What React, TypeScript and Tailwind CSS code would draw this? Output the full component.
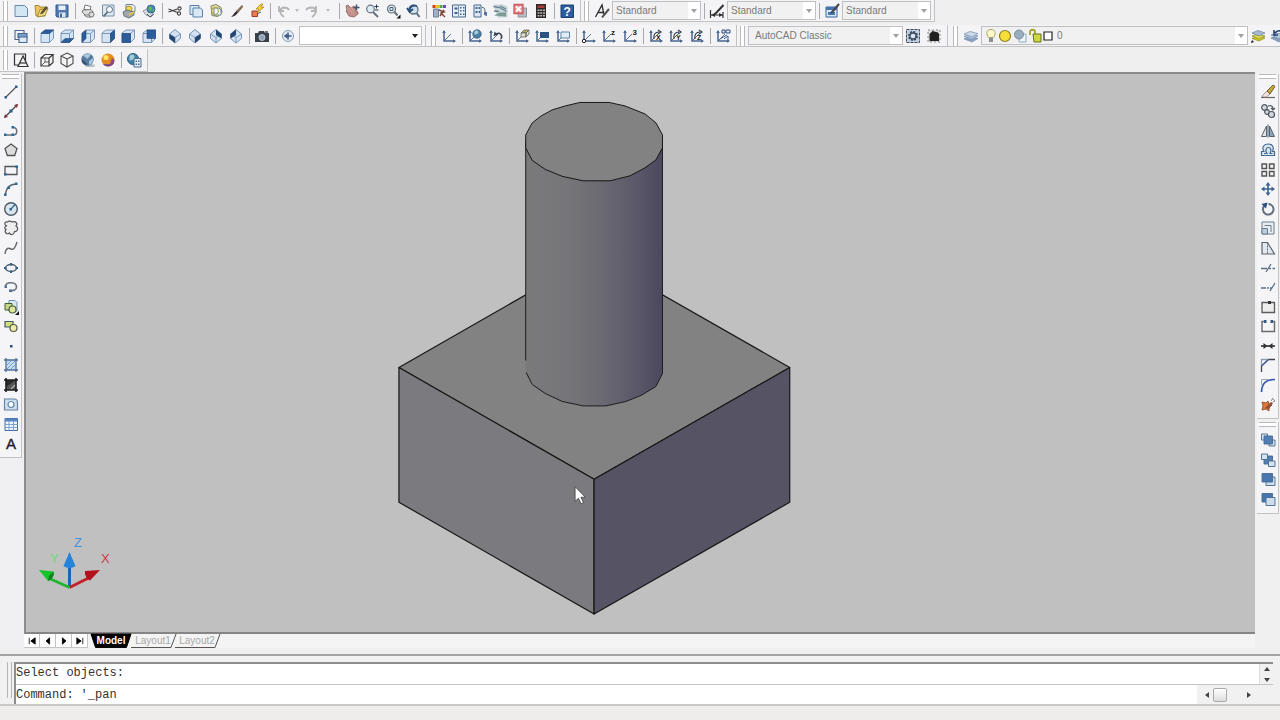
import { type ReactNode, useState } from "react"

const UCS_AXES = (
  <g stroke="#49668f" fill="none" strokeWidth="1.5">
    <path d="M3 3v10h11" />
    <path d="M3 13l7-7" strokeWidth="0.9" />
    <path d="M1.2 5L3 2l1.8 3zM12 11.2l3 1.8-3 1.8z" fill="#49668f" stroke="none" />
  </g>
)

// wireframe cube used by the preset views, one face is filled per view
function ViewCube({ face }: { face: string }) {
  return (
    <g strokeLinejoin="round">
      <path d="M2 5l4-3h8.500v8.500l-4 4H2z" fill="#d5e4f3" stroke="#6f8db3" strokeWidth="0.9" />
      <path d="M2 5.500h8.500v9M10.500 5.500l4-3.500" fill="none" stroke="#6f8db3" strokeWidth="0.9" />
      <path d={face} fill="#2b5c9c" stroke="#24487c" strokeWidth="0.6" />
    </g>
  )
}

function IsoCube({ face }: { face: string }) {
  return (
    <g strokeLinejoin="round">
      <path d="M8 1.500l5.500 4.500v4.500L8 15l-5.500-4.500V6z" fill="#d3e2f2" stroke="#6a8ab2" strokeWidth="0.9" />
      <path d="M2.500 6L8 9.500 13.500 6M8 9.500V15" fill="none" stroke="#6a8ab2" strokeWidth="0.8" />
      <path d={face} fill="#23466f" />
    </g>
  )
}

const icons: Record<string, ReactNode> = {
  new: <path d="M2 2.500h9.500l3 3v8H2z" fill="#d3e7f3" stroke="#6788ab" />,
  open: (
    <g strokeWidth="0.8">
      <path d="M2 2.500h4l1 1.500h5v9H3z" fill="#e9c75d" stroke="#937525" />
      <path d="M4.500 14L7 6.500l8-1-3 7z" fill="#f6df83" stroke="#937525" />
      <path d="M8 9l5-6 2 1.500-5 6-3 1z" fill="#5a5230" stroke="none" />
    </g>
  ),
  save: (
    <g>
      <path d="M2 2h12v12H3l-1-1z" fill="#4f7bb2" stroke="#36598a" />
      <path d="M4.500 2.500h7v4.500h-7z" fill="#e6f0f8" />
      <path d="M5 9.500h6.500V14H5z" fill="#dce7ee" />
      <path d="M6 10.500h2V14H6z" fill="#41689b" />
    </g>
  ),
  plot: (
    <g fill="#dcdcdc" stroke="#696969" strokeWidth="0.9">
      <path d="M5 2l6 1.500-1 4-6-1z" fill="#fafafa" />
      <path d="M3 7l8-.5 2 2.500-2 3H5l-3-3z" />
      <circle cx="11.500" cy="11.500" r="2.500" />
      <path d="M4 12l3 2h4" fill="none" />
    </g>
  ),
  preview: (
    <g>
      <path d="M2.500 2h11.500v11H2.500z" fill="#dce9f1" stroke="#7790aa" />
      <circle cx="9.500" cy="6.500" r="3" fill="#f6fbff" stroke="#5b6c7c" />
      <path d="M7.500 9l-4 4.500" stroke="#5b6c7c" strokeWidth="1.800" />
    </g>
  ),
  publish: (
    <g>
      <path d="M5 1.500h7l2 2v5H5z" fill="#e9edf2" stroke="#74859a" />
      <circle cx="8" cy="6" r="3" fill="#f0d94d" stroke="#9d842a" strokeWidth="0.8" />
      <path d="M2 9l4-2 7 2v3l-5 3-5-2z" fill="#9fa8b0" stroke="#545e68" strokeWidth="0.8" />
      <path d="M8 12l5-3" stroke="#e6c833" strokeWidth="1.500" />
    </g>
  ),
  dwf: (
    <g>
      <path d="M2 8l6-3 5 3-3 6-5-2z" fill="#d8dde2" stroke="#80878d" strokeWidth="0.8" />
      <circle cx="10" cy="6" r="4" fill="#4388b8" stroke="#2b6288" strokeWidth="0.8" />
      <path d="M7.500 4c2-2 3 0 3.500 1s-1 3-2 3-2-2-1.500-4zM12 6l1.500 1-1 2-1-1z" fill="#65b35a" />
      <path d="M6 11l3 3 4-3" fill="none" stroke="#4e555b" />
    </g>
  ),
  cut: (
    <g fill="none" stroke="#3f3f3f" strokeWidth="1.100">
      <path d="M1.500 6l9 3.500M1.500 9l9-3" />
      <circle cx="12.500" cy="5.500" r="1.600" />
      <circle cx="12" cy="10.500" r="1.600" />
    </g>
  ),
  copyclip: (
    <g fill="#d7e8f3" stroke="#5d81a8">
      <path d="M2 2.500h9v9H2z" />
      <path d="M5 5h7.500l2 2v7H5z" />
    </g>
  ),
  paste: (
    <g>
      <path d="M3 3l5-1.500 5 3 1 5-4 4-6-1z" fill="#e6dfa8" stroke="#83805a" />
      <path d="M6 5h5l2 2v5H6z" fill="#f2f6f8" stroke="#6d8ea0" />
      <circle cx="7" cy="8" r="3.500" fill="none" stroke="#a9a33c" />
    </g>
  ),
  match: (
    <g>
      <path d="M14 2.500L8.500 8l1.500 1.500L14.500 4z" fill="#9b7b5c" stroke="#5a4330" strokeWidth="0.7" />
      <path d="M8.500 8L10 9.500c-2 3-4 4-7 4.500 2-1.500 3-4 5.500-6z" fill="#332d2b" />
    </g>
  ),
  block: (
    <g>
      <path d="M3 8h5.500v5.500H3z" fill="#e97b58" stroke="#9a3d27" />
      <path d="M12 1L7 6h3L8 10l7-6h-3l2-3z" fill="#f7cc34" stroke="#a98215" strokeWidth="0.7" />
      <path d="M8 11l4-2" stroke="#555" />
    </g>
  ),
  undo: <path d="M9 14C4 11 4 5 9 4.500c2 0 4 .5 5 2.500M4 3v5h5" fill="none" stroke="#b4b4b4" strokeWidth="1.800" />,
  redo: <path d="M9 14c5-3 5-9 0-9.500C7 4.500 4 5 3 7M13 3v5H8" fill="none" stroke="#b4b4b4" strokeWidth="1.800" />,
  pan: (
    <g>
      <path d="M2 3l2-1 3 3 3-2 2 3-1 2 3 1v2l-4 3-5-1-3-5 1-1z" fill="#c58f8a" stroke="#85605e" strokeWidth="0.8" />
      <path d="M12.500 1.500v6M9.500 4.500h6" stroke="#42536a" strokeWidth="1.500" />
      <path d="M4 5l5 5M7 4l3 4" stroke="#dbb1ab" strokeWidth="0.8" />
    </g>
  ),
  zoomrt: (
    <g fill="none" stroke="#66717c">
      <circle cx="6.500" cy="6" r="3.800" fill="#deebf3" strokeWidth="1.200" />
      <path d="M9 9l5 5" strokeWidth="2" />
      <path d="M12.500 1.500v4M10.500 3.500h4M11 7h3.500" stroke="#2d3a48" />
    </g>
  ),
  zoomwin: (
    <g fill="none" stroke="#66717c">
      <circle cx="6.500" cy="6" r="4" fill="#deebf3" strokeWidth="1.200" />
      <path d="M9.500 9l3 3.500" strokeWidth="2" />
      <path d="M5 4.500h3v3H5z" stroke="#4d6073" />
      <path d="M15.500 11.500v4h-4z" fill="#111" stroke="none" />
    </g>
  ),
  zoomprev: (
    <g fill="none" stroke="#5f7080">
      <circle cx="8.500" cy="6.500" r="4.500" fill="#cfe0ec" strokeWidth="1.300" />
      <path d="M11.500 10l3 4" strokeWidth="2" />
      <path d="M12 3C8 1.500 5 4 4.500 7M2 5l2.500 4L8 6" stroke="#264b79" strokeWidth="1.800" />
    </g>
  ),
  properties: (
    <g>
      <path d="M1.500 2h3v3h-3z" fill="#d33a2c" />
      <path d="M5 2h3v3H5z" fill="#e8bf2f" />
      <path d="M8.500 2h3v3h-3z" fill="#51a849" />
      <path d="M12 2h3v3h-3z" fill="#704bb4" />
      <path d="M2.500 6h5v8h-5z" fill="#9fb0c8" stroke="#5a6c8a" strokeWidth="0.8" />
      <path d="M8 7l5 2-3 1 4 4M9 13l4-6" stroke="#7d4435" strokeWidth="1.400" fill="none" />
    </g>
  ),
  dcenter: (
    <g>
      <path d="M1.500 2h13v12h-13z" fill="#e6eff6" stroke="#49688c" />
      <path d="M3.500 4.500h3v2h-3zM3.500 9h3v2h-3zM9 4h1.500v1.500H9zM12 4h1.500v1.500H12zM9 7h1.500v1.500H9zM12 7h1.500v1.500H12zM9 10.500h1.500V12H9zM12 10.500h1.500V12H12z" fill="#3f638e" />
      <path d="M7.500 2v12" stroke="#7d99b5" />
    </g>
  ),
  palettes: (
    <g>
      <path d="M2 2h7v12H2z" fill="#dde9f2" stroke="#49688c" />
      <path d="M3.500 4h2v2h-2zM6.500 4H8v2H6.500zM3.500 8h2v2h-2zM6.500 8H8v2H6.500z" fill="#44688e" />
      <path d="M10 4.500c3 0 3 2 3 5" fill="none" stroke="#49535e" />
      <path d="M12 9h3v4l-3-1z" fill="#56779c" />
    </g>
  ),
  sheetset: (
    <g>
      <path d="M2 2h9l4 2v10H6z" fill="#ccd6d9" stroke="#c0cace" strokeWidth="0.8" />
      <path d="M1.500 3.500l6 1 7 4M2 8l5 .5M8 3l6 3" stroke="#648098" strokeWidth="1.300" fill="none" />
      <path d="M2 12.500l6-3h6v4z" fill="#7a9c94" />
    </g>
  ),
  markup: (
    <g>
      <path d="M7 5h7.500v9H6z" fill="#b8bcc2" stroke="#90969f" />
      <path d="M2 1.500h9v9H2z" fill="#e58b8e" stroke="#cf5b60" strokeWidth="1.300" />
      <path d="M4 3.500l5 5M9 3.500l-5 5" stroke="#fff" strokeWidth="2" />
    </g>
  ),
  calc: (
    <g>
      <path d="M3 1h10v14H3z" fill="#2e2b2b" />
      <path d="M4.500 2.500h7V5h-7z" fill="#a83b36" />
      <path d="M4.500 6.500h2v1.500h-2zM7.200 6.500h2v1.500h-2zM10 6.500h2v1.500h-2zM4.500 9.200h2v1.500h-2zM7.200 9.200h2v1.500h-2zM10 9.200h2v1.500h-2zM4.500 12h2v1.500h-2zM7.200 12h2v1.500h-2zM10 12h2v1.500h-2z" fill="#bdb6b3" />
    </g>
  ),
  help: (
    <g>
      <path d="M2 2h12.500v12.500H2z" fill="#2c5c9b" stroke="#1b3f72" />
      <text x="8.200" y="12.500" textAnchor="middle" fontSize="12" fontWeight="700" fill="#fff">?</text>
    </g>
  ),
  textstyle: (
    <g fill="none" stroke="#2d2d2d">
      <path d="M1.500 14L8 2l2 10M4 9.500h5" strokeWidth="1.300" />
      <path d="M15 6l-5 6-2 2.500" stroke="#555" strokeWidth="2" />
    </g>
  ),
  dimstyle: (
    <g stroke="#333" fill="none">
      <path d="M1.500 7v8M14 9v6M2 12h12" strokeWidth="1.200" />
      <path d="M14.500 2L8 9l-3 3" strokeWidth="2" />
      <path d="M2 12l4-2v4zM14 12l-4-2v4z" fill="#333" stroke="none" />
    </g>
  ),
  tablestyle: (
    <g>
      <path d="M2 4h11v10H2z" fill="#dbe9f5" stroke="#39629a" />
      <path d="M2 4h11v3H2zM4 9h7v3H4z" fill="#4777b1" />
      <path d="M15 1l-5 6-3 3" stroke="#464646" strokeWidth="2" />
    </g>
  ),
  namedviews: (
    <g stroke="#48688f" strokeWidth="1.100">
      <path d="M2 2.500h9v9H2z" fill="#f0f4f8" />
      <path d="M5 5.500h9v4H5z" fill="#7ba0c8" />
      <path d="M6 9h8v5.500H6z" fill="#dce9f4" />
    </g>
  ),
  top: <ViewCube face="M2 5.500L6 2h8.500l-4 3.500z" />,
  bottom: <ViewCube face="M2 14.500l4-4h8.500l-4 4z" />,
  left: <ViewCube face="M2 5.500L6 2v8.500l-4 4z" />,
  right: <ViewCube face="M10.500 5.500l4-3.500v8.500l-4 4z" />,
  front: <ViewCube face="M2 5.500h8.500v9H2z" />,
  back: <ViewCube face="M6 2h8.500v8.500H6z" />,
  sw: <IsoCube face="M2.500 6L8 9.500V15l-5.500-4.500z" />,
  se: <IsoCube face="M8 9.500L13.500 6v4.500L8 15z" />,
  ne: <IsoCube face="M8 1.500L13.500 6v4.500L8 7z" />,
  nw: <IsoCube face="M8 1.500L2.500 6v4.500L8 7z" />,
  camera: (
    <g>
      <path d="M1 5h3l1-2h5l1 2h4v9H1z" fill="#39414b" />
      <circle cx="8" cy="9.500" r="3" fill="#8ba4bf" stroke="#cfd7df" strokeWidth="0.8" />
      <path d="M11 3h3v2h-3z" fill="#6e7780" />
    </g>
  ),
  prevview: (
    <g>
      <circle cx="8" cy="8" r="5.500" fill="#e4ecf4" stroke="#8b9aab" />
      <path d="M8 4.500v7M4.500 8h7" stroke="#3c5b83" strokeWidth="1.600" />
      <path d="M4 8l3-2.500v5z" fill="#3c5b83" />
    </g>
  ),
  ucs: UCS_AXES,
  ucsworld: (
    <g>
      {UCS_AXES}
      <circle cx="10" cy="6" r="4.200" fill="#477fa5" stroke="#2e5878" strokeWidth="0.8" />
      <path d="M8 3c2-1 3 0 3.500 1S9 7 8 6.500 7 4 8 3z" fill="#a9d0d6" />
    </g>
  ),
  ucsprev: (
    <g>
      {UCS_AXES}
      <path d="M13 11c2-4-1-7-5-5" fill="none" stroke="#3a4655" strokeWidth="1.600" />
      <path d="M5.500 8l1-4.500L10 7z" fill="#3a4655" />
    </g>
  ),
  ucsface: (
    <g>
      {UCS_AXES}
      <path d="M7 5l3-3h5l-3 3z" fill="#b7b060" stroke="#555" strokeWidth="0.7" />
      <path d="M7 5h5v4H7zM12 5l3-3v4l-3 3z" fill="#dbe0d2" stroke="#555" strokeWidth="0.7" />
    </g>
  ),
  ucsobject: (
    <g>
      {UCS_AXES}
      <path d="M6 4h9v6H6z" fill="#285283" />
    </g>
  ),
  ucsview: (
    <g>
      {UCS_AXES}
      <path d="M6 4h8.500v6H6z" fill="#e3edf6" stroke="#5f81a8" />
    </g>
  ),
  ucsorigin: (
    <g>
      {UCS_AXES}
      <circle cx="3" cy="13" r="1.700" fill="#fff" stroke="#222" />
    </g>
  ),
  ucsz: (
    <g>
      {UCS_AXES}
      <text x="10" y="7" fontSize="8" fontWeight="700" fill="#222">z</text>
    </g>
  ),
  ucs3: (
    <g>
      {UCS_AXES}
      <text x="10.500" y="7" fontSize="8" fontWeight="700" fill="#222">3</text>
    </g>
  ),
  ucsrx: (
    <g>
      {UCS_AXES}
      <path d="M6 11c-1-4 1-7 5-7M10 2l3 2-3 2" fill="none" stroke="#303c4c" strokeWidth="1.200" />
      <text x="8" y="11.500" fontSize="7" fontWeight="700" fill="#222">X</text>
    </g>
  ),
  ucsry: (
    <g>
      {UCS_AXES}
      <path d="M6 11c-1-4 1-7 5-7M10 2l3 2-3 2" fill="none" stroke="#303c4c" strokeWidth="1.200" />
      <text x="8" y="11.500" fontSize="7" fontWeight="700" fill="#222">Y</text>
    </g>
  ),
  ucsrz: (
    <g>
      {UCS_AXES}
      <path d="M6 11c-1-4 1-7 5-7M10 2l3 2-3 2" fill="none" stroke="#303c4c" strokeWidth="1.200" />
      <text x="8" y="11.500" fontSize="7" fontWeight="700" fill="#222">Z</text>
    </g>
  ),
  ucsapply: (
    <g>
      {UCS_AXES}
      <path d="M7 2h3v3H7zM11 2h4v3h-4z" fill="#e7eef8" stroke="#2d4c7a" />
      <path d="M5 11l7-4M9 11l4-3v4" stroke="#3d5f92" fill="none" />
    </g>
  ),
  wssettings: (
    <g>
      <path d="M1.500 1.500h13v13h-13z" fill="#c3d0de" stroke="#394b60" strokeDasharray="3 1" />
      <circle cx="8" cy="8" r="4" fill="none" stroke="#3b4d62" strokeWidth="2" strokeDasharray="2 1.100" />
      <circle cx="8" cy="8" r="3" fill="#dce7f3" stroke="#3b4d62" strokeWidth="1.300" />
    </g>
  ),
  myws: (
    <g>
      <path d="M2 2h12v12H2z" fill="#dedede" stroke="#888" strokeDasharray="2 2" />
      <path d="M3.500 6l3-3 5.500 1.500 1 1.500v7h-9.500z" fill="#202020" />
    </g>
  ),
  layers: (
    <g stroke="#7890ae" strokeWidth="0.7">
      <path d="M1 11l6-2.500 8 2L9 14z" fill="#8aa3c2" />
      <path d="M1 8.500L7 6l8 2-6 3.500z" fill="#abc0d8" />
      <path d="M1 6l6-2.500 8 2L9 9z" fill="#cddbe9" />
    </g>
  ),
  layercur: (
    <g strokeWidth="0.7">
      <path d="M2 10.500L8 8l7 2-6 3z" fill="#d0cb2c" stroke="#8e8a1c" />
      <path d="M2 8l6-2 7 2-6 3z" fill="#e0da4c" stroke="#8e8a1c" />
      <path d="M2 5l6-2.500L15 5 9 8z" fill="#a6b9d1" stroke="#65809f" />
      <path d="M1 15l1-3 2 2z" fill="#111" />
    </g>
  ),
  layerprev: (
    <g strokeWidth="0.7">
      <path d="M1 10l6-2 8 2-6 4z" fill="#8aa3c2" stroke="#65809f" />
      <path d="M1 7l6-2 8 2-6 4z" fill="#b5c8dc" stroke="#65809f" />
      <path d="M5 5c2-3 6-3 8 0M4 2v5h4" fill="none" stroke="#223f6c" strokeWidth="1.600" />
    </g>
  ),
  wire2d: (
    <g fill="none" stroke="#333" strokeWidth="1.200">
      <path d="M1.500 2h11v11h-11z" />
      <path d="M10 4L5 14.500h10z" fill="#f0f0f0" />
      <path d="M7 11h6" />
    </g>
  ),
  hidden3d: (
    <g fill="none" stroke="#3a3a3a" strokeWidth="1.200">
      <path d="M2 6h8v8H2zM2 6l4-3.500h8L10 6M14 2.500v8L10 14" fill="#f4f4f4" />
      <path d="M6 6.500V10h4M6 10l-3.500 3.500" strokeWidth="0.8" />
    </g>
  ),
  wire3d: <path d="M8 1l6 3v7.500L8 15l-6-3.500V4zM2 4l6 3 6-3M8 7v8" fill="#f6f6f6" stroke="#4b4b4b" strokeWidth="1.100" />,
  realistic: (
    <g>
      <ellipse cx="10" cy="13.500" rx="5" ry="1.500" fill="#b9bdc2" />
      <circle cx="7.500" cy="7.500" r="6.200" fill="#56799e" />
      <path d="M3 3.500c2-2 6-2.500 8-1L7.500 7zM9 9l4-3c1 3-1 6-4 7z" fill="#a9c5dd" />
      <path d="M2 7l5 5-1 1C3 12 1.500 10 2 7z" fill="#334f70" />
    </g>
  ),
  conceptual: (
    <g>
      <circle cx="8" cy="8" r="6.500" fill="#e38a21" />
      <path d="M3 12a6.500 6.500 0 0011-1.500c-3 2-7 2-11 1.500z" fill="#6a3f9a" />
      <path d="M9 14.500a6.500 6.500 0 005.500-6L12 6z" fill="#8a4a86" />
      <circle cx="6" cy="5.500" r="2.600" fill="#ffe65a" />
    </g>
  ),
  vsmanager: (
    <g>
      <circle cx="7" cy="7" r="5.500" fill="#3f81a7" stroke="#2c6080" />
      <path d="M3.500 4c3-3 5-1 5 1s-3 4-5 3z" fill="#a5ced5" />
      <path d="M8 6.500h7V15H8z" fill="#e6eff5" stroke="#45688d" />
      <path d="M9.500 8.500h1.500V10H9.500zM12 8.500h1.500V10H12zM9.500 11.500h1.500V13H9.500zM12 11.500h1.500V13H12z" fill="#45688d" />
    </g>
  ),

  line: (
    <g>
      <path d="M2.500 13.500l11-11" stroke="#555" strokeWidth="1.200" />
      <path d="M1.500 12h2.500v2.500H1.500zM12 1.500h2.500V4H12z" fill="#2c5f8e" />
    </g>
  ),
  xline: (
    <g>
      <path d="M1.500 14.500l13-13" stroke="#444" strokeWidth="1.300" />
      <path d="M1 15l1-4 3 3zM15 1l-1 4-3-3z" fill="#8b3434" />
      <path d="M6.500 6.500h3v3h-3z" fill="#2c5f8e" />
    </g>
  ),
  pline: (
    <g>
      <path d="M2 12h8c5 0 5-7.500 0-7.500" fill="none" stroke="#6b7177" strokeWidth="1.500" />
      <path d="M1 10.500h2.500V13H1zM8.500 10.500H11V13H8.500zM8.500 3H11v2.500H8.500z" fill="#2c6a98" />
    </g>
  ),
  polygon: <path d="M8 2l6 4.500-2.300 7H4.300L2 6.500z" fill="#dcdcdc" stroke="#555" strokeWidth="1.300" />,
  rect: (
    <g>
      <path d="M2 4.500h12v8H2z" fill="none" stroke="#555" strokeWidth="1.300" />
      <path d="M1 11h2.500v2.500H1zM12.500 3.500H15V6h-2.500z" fill="#2c6a98" />
    </g>
  ),
  arc: (
    <g>
      <path d="M2.500 14C3 7 7 3 13.500 3" fill="none" stroke="#5e646a" strokeWidth="1.400" />
      <path d="M1 12.500h2.500V15H1zM4.500 5.500H7V8H4.500zM12 1.500h2.500V4H12z" fill="#2c6a98" />
    </g>
  ),
  circle: (
    <g>
      <circle cx="8" cy="8" r="6.300" fill="#d9e4ec" stroke="#4d5a66" strokeWidth="1.400" />
      <path d="M8 8l4-4.500" stroke="#2c6a98" strokeWidth="1.300" />
      <path d="M6.500 7h2.500v2.500H6.500z" fill="#2c6a98" />
    </g>
  ),
  revcloud: <path d="M4 6C1 5 1 1.500 4.500 2c1-1.500 4-1 4.500 0C13 .5 15 4 13 6c3 2 1.500 6-1.500 5.500-.5 3.500-4 4-5 1.500C4 15 .5 12 3 9.500 .5 8 2 6 4 6z" fill="#eee" stroke="#555" strokeWidth="1.200" />,
  spline: <path d="M2 14c1-7 4-6 6-5s4 0 6-7" fill="none" stroke="#666" strokeWidth="1.400" />,
  ellipse: (
    <g>
      <ellipse cx="8" cy="8" rx="5.500" ry="3.500" fill="#eef2f5" stroke="#4e5963" strokeWidth="1.400" />
      <path d="M7 3h2v2.500H7zM7 10.500h2V13H7zM1 7h2.500v2H1zM12.500 7H15v2h-2.500z" fill="#2c5f8e" />
    </g>
  ),
  ellipsearc: (
    <g>
      <path d="M2.500 7c1-5 11-4 11 1 0 3-3 4-6 3.500" fill="none" stroke="#6a737c" strokeWidth="1.600" />
      <path d="M1.500 6.500H4V9H1.500zM6 10.500h3V13H6z" fill="#4e7196" />
    </g>
  ),
  insert: (
    <g>
      <path d="M6 1.500h6l2 2V12H6z" fill="#dbe8f2" stroke="#6f8fb0" />
      <path d="M2 4.500h7V11H2z" fill="#c6d886" stroke="#3f5e35" />
      <circle cx="9.500" cy="10.500" r="3.500" fill="#dfe79c" stroke="#4c5f3b" strokeWidth="1.200" />
      <path d="M16 12v4h-4z" fill="#111" />
    </g>
  ),
  makeblock: (
    <g>
      <path d="M2 3.500h8V9H2z" fill="#d5dd7a" stroke="#3f5e6a" strokeWidth="1.200" />
      <circle cx="10.500" cy="10" r="3.500" fill="#eceda6" stroke="#555b46" strokeWidth="1.200" />
    </g>
  ),
  point: <path d="M7 7h2.500v2.500H7z" fill="#2b4d7c" />,
  hatch: (
    <g>
      <path d="M3 3h10v10H3z" fill="#c7dcef" />
      <path d="M3 1v14M13 1v14M1 3h14M1 13h14" stroke="#4d6f99" strokeWidth="1.300" />
      <path d="M4 8l4-4M4 12l8-8M8 12l4-4" stroke="#6f9cc8" />
    </g>
  ),
  gradient: (
    <g>
      <path d="M3 3h10v10H3z" fill="#555" />
      <path d="M3 3h10L3 10z" fill="#2a2a2a" />
      <path d="M3 1v14M13 1v14M1 3h14M1 13h14" stroke="#1e1e1e" strokeWidth="1.600" />
      <path d="M8 12l4-4" stroke="#aaa" strokeWidth="1.500" />
    </g>
  ),
  region: (
    <g>
      <path d="M1.500 3h10c2 0 3 2 3 4v7h-13z" fill="#cfdfee" stroke="#6483a6" strokeWidth="1.200" />
      <circle cx="8" cy="8.500" r="3" fill="#fafcfd" stroke="#6483a6" strokeWidth="1.200" />
    </g>
  ),
  table: (
    <g>
      <path d="M2 2.500h12.500v12H2z" fill="#eef5fc" stroke="#47699c" />
      <path d="M2 2.500h12.500v3H2z" fill="#5884bd" />
      <path d="M2 8.500h12.500M2 11.500h12.500M6 5v9.500M10.500 5v9.500" stroke="#7ea2d0" />
    </g>
  ),
  mtext: <text x="8" y="13.500" textAnchor="middle" fontSize="15" fill="#222" stroke="#222" strokeWidth="0.4">A</text>,

  erase: (
    <g>
      <path d="M1 13.500h14" stroke="#666" strokeWidth="1.200" />
      <path d="M2 12l5-5 3 3-3.500 3H3z" fill="#f0e2df" stroke="#8d7c78" strokeWidth="0.8" />
      <path d="M7 7l6-6 2 1.500-5 7.500z" fill="#c9a831" stroke="#51472a" strokeWidth="0.8" />
    </g>
  ),
  copy: (
    <g fill="#d3d9df" stroke="#4d5761" strokeWidth="1.200">
      <circle cx="4.500" cy="4.500" r="2.800" />
      <circle cx="7" cy="9" r="2.300" />
      <circle cx="11.500" cy="11.500" r="3" />
      <path d="M8 3c3-1 5 0 5 3M11 5l2 2 2-2" fill="none" />
    </g>
  ),
  mirror: (
    <g stroke="#5a626a">
      <path d="M6.500 3v10.500h-5z" fill="#e1e6ea" />
      <path d="M9.500 3v10.500h5z" fill="#86a5c4" />
      <path d="M8 1.500v13" stroke="#38597e" />
    </g>
  ),
  offset: (
    <g stroke="#456b90" strokeWidth="1.200">
      <path d="M1.500 13.500h13V9.500h-2c2-4 0-7.500-4.500-7.500S1.500 5.500 4 9.500H1.500z" fill="#d9e6f0" />
      <path d="M4 11.500h3c-2-3-1-6 1.500-6s3 3 1.500 6h2.500" fill="none" />
    </g>
  ),
  array: <path d="M2 2h4.500v4.500H2zM9.500 2H14v4.500H9.500zM2 9.500h4.500V14H2zM9.500 9.500H14V14H9.500z" fill="#f3f3f3" stroke="#555" strokeWidth="1.400" />,
  move: (
    <g fill="#3b6391">
      <path d="M8 3v10M3 8h10" stroke="#3b6391" strokeWidth="1.600" />
      <path d="M8 1l2.500 3.500h-5zM8 15l2.500-3.500h-5zM1 8l3.500-2.500v5zM15 8l-3.500-2.500v5z" />
    </g>
  ),
  rotate: (
    <g>
      <path d="M4.500 4.500A5.300 5.300 0 108.500 3" fill="none" stroke="#66717e" strokeWidth="2" />
      <path d="M1.500 3l6-1.500-1.500 6z" fill="#2e4f7c" />
    </g>
  ),
  scale: (
    <g fill="#e8eef3" stroke="#6b7b8b">
      <path d="M2 2h12v12H2z" />
      <path d="M2 8.500h5.500V14H2z" fill="#bccddf" />
      <path d="M4.500 5.500H11V12" fill="none" />
    </g>
  ),
  stretch: (
    <g>
      <path d="M2 2.500h5.500L14.500 14H2z" fill="#e1e8ef" stroke="#5c6772" strokeWidth="1.200" />
      <path d="M7.500 2.500V14" stroke="#5c6772" strokeDasharray="2 1" />
    </g>
  ),
  trim: <path d="M1 8.500h6M9 8.500h2M12.500 8.500H15M11 4l-5 8" fill="none" stroke="#5b6f86" strokeWidth="1.300" />,
  extend: <path d="M1 9h5M7 9h2M10 9h2M15 4l-5 8" fill="none" stroke="#5b6f86" strokeWidth="1.300" />,
  breakpt: (
    <g>
      <path d="M2 3.500h12.500v10H2z" fill="#ededed" stroke="#5b5b5b" strokeWidth="1.300" />
      <path d="M8 2h3v3H8z" fill="#333" />
    </g>
  ),
  breakline: (
    <g>
      <path d="M5 3.500H2v10h12.500v-10H12" fill="none" stroke="#6a6a6a" strokeWidth="1.400" />
      <path d="M4 2h2.500v3H4zM10.500 2H13v3h-2.500z" fill="#345a80" />
    </g>
  ),
  join: (
    <g fill="#333">
      <path d="M1 8h14" stroke="#333" strokeWidth="1.600" />
      <path d="M3.500 5l4 3-4 3zM12.500 5l-4 3 4 3z" />
    </g>
  ),
  chamfer: (
    <g fill="none" strokeWidth="1.300">
      <path d="M1.500 15V9l7-6.500H15" stroke="#444" />
      <path d="M1.500 9V2.500h7" stroke="#8f9dab" />
      <path d="M1.500 9l7-6.500" stroke="#4b6baf" />
    </g>
  ),
  fillet: (
    <g fill="none">
      <path d="M1.500 8V2.500H8" stroke="#9aa6b4" />
      <path d="M1.500 15C2 6 6 2.500 15 2.500" stroke="#385bad" strokeWidth="1.700" />
    </g>
  ),
  explode: (
    <g>
      <path d="M2 6l4 1 2-2 1 3 3 1-3 2v4l-3-2-4 1 1-4z" fill="#df7838" stroke="#86401d" strokeWidth="0.8" />
      <path d="M5 12l6-6 2 1-4 6z" fill="#8b5039" />
      <path d="M11 5l2-3M13 6l2-1M12 2l3 3" stroke="#888" />
    </g>
  ),
  front1: (
    <g stroke="#47698f" strokeWidth="0.9">
      <path d="M1.500 2h6v6h-6zM9 8h6v6H9z" fill="#d5e3ef" />
      <path d="M4 4h8.500v8H4z" fill="#517eb4" />
    </g>
  ),
  back1: (
    <g stroke="#47698f" strokeWidth="0.9">
      <path d="M4 4h8.500v8H4z" fill="#517eb4" />
      <path d="M1.500 2h6v5.500h-6zM8.500 9H15v5.500H8.500z" fill="#d5e3ef" />
    </g>
  ),
  above: (
    <g stroke="#47698f" strokeWidth="0.9">
      <path d="M6 6h9v8.500H6z" fill="#cddded" />
      <path d="M2 2.500h10.500V11H2z" fill="#4877b0" />
    </g>
  ),
  under: (
    <g stroke="#47698f" strokeWidth="0.9">
      <path d="M2 2.500h10.500V11H2z" fill="#4877b0" />
      <path d="M6 6.500h9v8H6z" fill="#cddded" />
    </g>
  ),
}

// toolbar buttons share the group evenly, so the size follows the number of icons
const groupWidth: Record<number, string> = {
  1: "w-5",
  2: "w-[41px]",
  3: "w-[61px]",
  4: "w-[81px]",
  5: "w-[102px]",
  6: "w-[122px]",
}

function Tool({ name }: { name: string }) {
  return (
    <button type="button" aria-label={name} className="flex flex-1 items-center justify-center hover:bg-blue-100">
      <svg viewBox="0 0 16 16" className="h-4 w-4">
        {icons[name]}
      </svg>
    </button>
  )
}

function Group({ names }: { names: string[] }) {
  return (
    <div className={`flex h-5 shrink-0 ${groupWidth[names.length]}`}>
      {names.map((name) => (
        <Tool key={name} name={name} />
      ))}
    </div>
  )
}

function Sep() {
  return (
    <div className="flex w-[6px] shrink-0 justify-center">
      <div className="h-4 w-px bg-[#a9a9a9]" />
    </div>
  )
}

function Grip() {
  return <div className="mx-[3px] h-5 w-[5px] shrink-0 border-x border-[#b9b9b9] bg-white" />
}

function Bar({ children }: { children: ReactNode }) {
  return (
    <div className="flex h-full shrink-0 items-center border-r border-b border-[#c2c2c2] bg-[#f4f4f6] pr-[3px]">
      {children}
    </div>
  )
}

function Groups({ groups }: { groups: string[][] }) {
  return (
    <>
      {groups.map((names, i) => (
        <div key={names[0]} className="flex shrink-0 items-center">
          {i > 0 && <Sep />}
          <Group names={names} />
        </div>
      ))}
    </>
  )
}

interface DropProps {
  label: string
  options: string[]
  width: string
  pad?: string
  white?: boolean
  children?: ReactNode
}

function Drop({ label, options, width, pad = "pl-[3px]", white = false, children }: DropProps) {
  return (
    <div className={`relative h-[19px] shrink-0 ${width}`}>
      <select
        aria-label={label}
        className={`block h-full w-full appearance-none border border-[#bfc0c4] text-[10px] leading-4 text-[#7a7a7a] outline-none ${pad} ${
          white ? "bg-white" : "bg-[#f1f1f1]"
        }`}
      >
        {options.map((o) => (
          <option key={o}>{o}</option>
        ))}
      </select>
      {children}
      <div className="pointer-events-none absolute inset-y-px right-px flex w-3 items-center justify-center bg-white">
        <svg viewBox="0 0 6 4" className="h-1 w-1.5">
          <path d="M0 0h6L3 4z" fill={white ? "#222" : "#a0a0a0"} />
        </svg>
      </div>
    </div>
  )
}

function Caret() {
  return (
    <button type="button" aria-label="history" className="flex h-5 w-2 items-center justify-center">
      <svg viewBox="0 0 6 4" className="h-[3px] w-1">
        <path d="M0 0h6L3 4z" fill="#b0b0b0" />
      </svg>
    </button>
  )
}

function SideBar({ names, height }: { names: string[]; height: string }) {
  return (
    <div className="w-[22px] shrink-0 border-r border-b border-[#c2c2c2] bg-[#f5f5f8] pb-1">
      <div className="mx-[2px] h-[5px] border-y border-[#b9b9b9] bg-white" />
      <div className={`mt-[3px] flex flex-col ${height}`}>
        {names.map((name) => (
          <Tool key={name} name={name} />
        ))}
      </div>
    </div>
  )
}

const standardGroups = [
  ["new", "open", "save"],
  ["plot", "preview", "publish", "dwf"],
  ["cut", "copyclip", "paste", "match", "block"],
]
const standardTail = [
  ["pan", "zoomrt", "zoomwin", "zoomprev"],
  ["properties", "dcenter", "palettes", "sheetset", "markup", "calc"],
  ["help"],
]
const viewGroups = [
  ["namedviews"],
  ["top", "bottom", "left", "right", "front", "back"],
  ["sw", "se", "ne", "nw"],
  ["camera"],
  ["prevview"],
]
const ucsGroups = [
  ["ucs"],
  ["ucsworld", "ucsprev"],
  ["ucsface", "ucsobject", "ucsview"],
  ["ucsorigin", "ucsz", "ucs3"],
  ["ucsrx", "ucsry", "ucsrz"],
  ["ucsapply"],
]
const styleGroups = [["wire2d"], ["hidden3d", "wire3d", "realistic", "conceptual"], ["vsmanager"]]
const drawTools = [
  "line", "xline", "pline", "polygon", "rect", "arc", "circle", "revcloud", "spline", "ellipse",
  "ellipsearc", "insert", "makeblock", "point", "hatch", "gradient", "region", "table", "mtext",
]
const modifyTools = [
  "erase", "copy", "mirror", "offset", "array", "move", "rotate", "scale", "stretch",
  "trim", "extend", "breakpt", "breakline", "join", "chamfer", "fillet", "explode",
]
const orderTools = ["front1", "back1", "above", "under"]

function Model() {
  return (
    <svg viewBox="26 73 1229 559" className="h-full w-full" strokeLinejoin="round">
      <defs>
        <linearGradient id="side" x1="0" x2="1" y1="0" y2="0">
          <stop offset="0" stopColor="#7a7a7b" />
          <stop offset="0.3" stopColor="#767579" />
          <stop offset="0.55" stopColor="#6b6a72" />
          <stop offset="0.8" stopColor="#5b5969" />
          <stop offset="1" stopColor="#4b485e" />
        </linearGradient>
      </defs>
      <g stroke="#161616" strokeWidth="1.2">
        <path d="M398.500 367L594 255 790 367 594 479z" fill="#828282" />
        <path d="M398.500 367L594 479v135L398.500 502z" fill="#7b7a7e" />
        <path d="M790 367L594 479v135l196-112z" fill="#565464" />
      </g>
      <path
        d="M525.500 140v232l6.500 12 13 9 17 8 21 4.500h23l20-4.500 15-6 15-9 6.500-13V140z"
        fill="url(#side)"
      />
      <path
        d="M525.500 140v220M526 372l6 12 13 9 17 8 21 4.500h23l20-4.500 15-6 15-9 6.500-13V140"
        fill="none"
        stroke="#1c1c1f"
      />
      <path
        d="M525.500 134l6.500-12 9-7 11-6 13-4 15-3.500h29l16 3.500 20 8 11 9 6.500 12v13l-6.500 12-11 8-15 8-20 5h-27l-21-4.500-17-7-13-9-6.500-12.500z"
        fill="#828282"
        stroke="#161616"
      />
      <path d="M575 486.500v14.500l3.300-3 2.700 5.500 2.300-1.200-2.500-5.300h4.400z" fill="#fff" stroke="#333" strokeWidth="0.7" />
    </svg>
  )
}

function UcsIcon() {
  return (
    <svg viewBox="0 -8 80 64" className="absolute bottom-[39px] left-[11px] h-16 w-20">
      <path d="M32.500 50.500V20" stroke="#1a66b5" strokeWidth="3" />
      <path d="M32.500 50.500l22-11" stroke="#c2202a" strokeWidth="3" />
      <path d="M32.500 50.500l-20-9" stroke="#1fb52f" strokeWidth="3" />
      <path d="M32.500 15l6 14c-3 2.500-9 2.500-12 0z" fill="#2583da" />
      <path d="M63 33l-15 1c-.5 4 1.500 8 5 9.500z" fill="#b3111c" />
      <path d="M2 33l14.500 1.500c1 4-1.500 8-5.500 9.500z" fill="#15c32b" />
      <path d="M16.500 34.500c1 4-1.500 8-5.500 9.500l1-5z" fill="#0d7f1d" />
      <text x="37" y="10" fontSize="13" fill="#4593df">Z</text>
      <text x="64" y="26" fontSize="13" fill="#d23b48">X</text>
      <text x="13" y="26" fontSize="13" fill="#67d874">Y</text>
    </svg>
  )
}

const arrowPaths = {
  first: "M1.500 1v8M9 1L3.500 5 9 9z",
  prev: "M7 1L2.500 5 7 9z",
  next: "M3 1l4.500 4L3 9z",
  last: "M8.500 1v8M1 1l5.500 4L1 9z",
}

const tabs = [
  { name: "Model", width: "w-[40px]" },
  { name: "Layout1", width: "w-[44px]" },
  { name: "Layout2", width: "w-[44px]" },
]

function Tabs() {
  const [active, setActive] = useState("Model")

  return (
    <div className="flex h-[14px] shrink-0 bg-[#f4f4f4]">
      {Object.entries(arrowPaths).map(([name, d]) => (
        <button
          key={name}
          type="button"
          aria-label={name}
          className="flex w-4 items-center justify-center border-r border-b border-[#c4c4c4] bg-white"
        >
          <svg viewBox="0 0 10 10" className="h-2 w-2">
            <path d={d} fill="#000" stroke="#000" strokeWidth="1" />
          </svg>
        </button>
      ))}
      <div className="ml-[3px] flex">
        {tabs.map((tab) => {
          const on = tab.name === active
          return (
            <button
              key={tab.name}
              type="button"
              onClick={() => setActive(tab.name)}
              className={`relative h-[14px] text-center text-[10px] leading-[14px] ${tab.width} ${
                on ? "font-bold text-white" : "text-[#a8a8a8]"
              }`}
            >
              <svg viewBox="0 0 44 14" preserveAspectRatio="none" className="absolute inset-0 h-full w-full overflow-visible">
                <path
                  d={on ? "M0 0l5 13.500h34L44 0z" : "M0 13.500h40L45 0"}
                  fill={on ? "#000" : "none"}
                  stroke={on ? "#000" : "#555"}
                />
              </svg>
              <span className="relative">{tab.name}</span>
            </button>
          )
        })}
      </div>
    </div>
  )
}

function Arrow({ d, label }: { d: string; label: string }) {
  return (
    <button type="button" aria-label={label} className="flex h-3 w-3 items-center justify-center">
      <svg viewBox="0 0 6 6" className="h-1.5 w-1.5">
        <path d={d} fill="#444" />
      </svg>
    </button>
  )
}

function CommandLine() {
  const [command, setCommand] = useState("'_pan")

  return (
    <section className="flex h-[52px] shrink-0 border-t-2 border-b-2 border-t-[#a2a2a2] border-b-[#c9c9c9] bg-[#f1f1f1] pt-[6px]">
      <div className="ml-[7px] h-9 w-[5px] border-x border-[#b5b5b5]" />
      <div className="ml-[2px] mr-[7px] flex flex-1 flex-col border-t-2 border-l-2 border-[#8d8d8d] bg-white font-['Liberation_Mono',monospace] text-[12px] leading-[18px] text-[#333]">
        <div className="flex h-[21px] shrink-0 border-b border-[#c4c4c4]">
          <p className="flex-1">Select objects:</p>
          <div className="flex w-[14px] flex-col items-center justify-between border-l border-[#ddd] bg-[#f1f1f1]">
            <div className="flex h-[9px] items-center"><Arrow label="scroll up" d="M0 5l3-4 3 4z" /></div>
            <div className="flex h-[9px] items-center"><Arrow label="scroll down" d="M0 1l3 4 3-4z" /></div>
          </div>
        </div>
        <div className="flex flex-1 items-center">
          <label htmlFor="command" className="mr-[7px]">Command:</label>
          <input
            id="command"
            value={command}
            onChange={(e) => setCommand(e.target.value)}
            className="min-w-0 flex-1 bg-transparent outline-none"
          />
          <div className="flex h-full w-[76px] items-center bg-[#f1f1f1] pl-1">
            <Arrow label="scroll left" d="M5 0L1 3l4 3z" />
            <div className="h-[14px] w-[14px] rounded-[2px] border border-[#aaa] bg-linear-to-b from-white to-[#ddd]" />
            <div className="ml-4 flex">
              <Arrow label="scroll right" d="M1 0l4 3-4 3z" />
            </div>
          </div>
        </div>
      </div>
    </section>
  )
}

export default function App() {
  return (
    <div className="flex h-screen flex-col overflow-hidden bg-[#efeff0] font-['Liberation_Sans',Arial,sans-serif]">
      {/* Standard + styles */}
      <div className="flex h-[22px] shrink-0">
        <Bar>
          <Grip />
          <Groups groups={standardGroups} />
          <Sep />
          <Group names={["undo"]} />
          <Caret />
          <Group names={["redo"]} />
          <div className="mr-[4px] ml-[3px]">
            <Caret />
          </div>
          <Sep />
          <Groups groups={standardTail} />
        </Bar>
        <Bar>
          <Grip />
          <Group names={["textstyle"]} />
          <Drop label="Text style" options={["Standard"]} width="w-[89px]" />
          <Sep />
          <Group names={["dimstyle"]} />
          <Drop label="Dimension style" options={["Standard"]} width="w-[89px]" />
          <Sep />
          <Group names={["tablestyle"]} />
          <Drop label="Table style" options={["Standard"]} width="w-[89px]" />
        </Bar>
      </div>

      {/* View, UCS, workspaces, layers */}
      <div className="flex h-[25px] shrink-0 pt-[3px]">
        <Bar>
          <Grip />
          <Groups groups={viewGroups} />
          <div className="pl-px">
            <Drop label="View" options={[""]} width="w-[123px]" white />
          </div>
        </Bar>
        <Bar>
          <div className="flex items-center pl-[2px]">
            <Grip />
            <Groups groups={ucsGroups} />
          </div>
        </Bar>
        <Bar>
          <Grip />
          <Drop label="Workspace" options={["AutoCAD Classic"]} width="w-[155px]" pad="pl-[6px]" />
          <Group names={["wssettings", "myws"]} />
        </Bar>
        <div className="flex min-w-0 flex-1 items-center border-b border-[#c2c2c2] bg-[#f4f4f6] pl-[2px]">
          <Grip />
          <Group names={["layers"]} />
          <Drop label="Layer" options={["0"]} width="w-[267px]" pad="pl-[75px]">
            <svg viewBox="0 0 70 16" className="pointer-events-none absolute top-[2px] left-[2px] h-4 w-[70px]">
              <path d="M8 1.500c5 0 5 5 2.500 8h-5C3 6.500 3 1.500 8 1.500z" fill="#fbfbc9" stroke="#a7a76a" />
              <path d="M6 10h4v4H6z" fill="#8a8f94" />
              <circle cx="22" cy="8" r="5.500" fill="#f5df38" stroke="#8d812c" strokeWidth="1.200" />
              <path d="M36 6h7v8h-7z" fill="#eef4f9" stroke="#8eabc7" />
              <circle cx="36" cy="6.500" r="4.500" fill="#98adbd" stroke="#778e9f" />
              <path d="M47 7V4c0-3 5-3 5 0v3" fill="none" stroke="#a0a62c" strokeWidth="1.800" />
              <path d="M50 6h8v8h-7z" fill="#cdd63c" stroke="#687025" />
              <path d="M61 4h8v8h-8z" fill="#fff" stroke="#222" strokeWidth="1.200" />
            </svg>
          </Drop>
          <Group names={["layercur"]} />
          <Group names={["layerprev"]} />
        </div>
      </div>

      {/* Visual styles */}
      <div className="flex h-[25px] shrink-0 pt-[2px]">
        <Bar>
          <Grip />
          <Groups groups={styleGroups} />
        </Bar>
      </div>

      <main className="flex min-h-0 flex-1">
        <aside className="w-6 shrink-0 bg-[#f0eff2] pt-[2px]">
          <SideBar names={drawTools} height="h-[371px]" />
        </aside>

        <div className="flex min-w-0 flex-1 flex-col">
          <div className="relative min-h-0 flex-1 border-2 border-r-0 border-t-[#8a8a8a] border-b-[#858585] border-l-[#8c8c8c] bg-[#c0c0c0]">
            <Model />
            <UcsIcon />
          </div>
          <Tabs />
        </div>

        <aside className="flex w-[25px] shrink-0 flex-col gap-[3px] bg-[#f0f0f1] pt-[2px] pl-[2px]">
          <SideBar names={modifyTools} height="h-[332px]" />
          <SideBar names={orderTools} height="h-[79px]" />
        </aside>
      </main>

      <div className="h-[6px] shrink-0" />
      <CommandLine />
      <footer className="h-[14px] shrink-0 bg-[#efecec]" />
    </div>
  )
}
